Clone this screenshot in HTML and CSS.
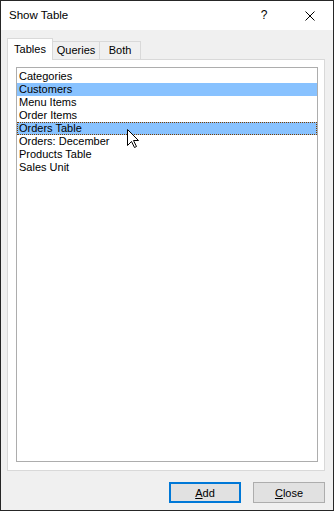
FILE: index.html
```html
<!DOCTYPE html>
<html lang="en">
<head>
    <meta charset="UTF-8">
    <title>Show Table</title>
    <link rel="stylesheet" href="styles.css">
</head>
<body>
    <div class="window">
        <div class="titlebar">
            <span class="title">Show Table</span>
            <span class="title-btn help">?</span>
            <span class="title-btn close-x">
                <svg width="10" height="10" viewBox="0 0 10 10">
                    <path d="M0.5 0.5 L9.5 9.5 M9.5 0.5 L0.5 9.5" stroke="#000" stroke-width="1" fill="none"/>
                </svg>
            </span>
        </div>

        <div class="dialog-body">
            <div class="tabs">
                <div class="tab tab-tables selected">Tables</div>
                <div class="tab tab-queries">Queries</div>
                <div class="tab tab-both">Both</div>
            </div>

            <div class="tab-panel">
                <ul class="listbox">
                    <li>Categories</li>
                    <li class="selected">Customers</li>
                    <li>Menu Items</li>
                    <li>Order Items</li>
                    <li class="selected focused">Orders Table</li>
                    <li>Orders: December</li>
                    <li>Products Table</li>
                    <li>Sales Unit</li>
                </ul>
            </div>

            <div class="buttons">
                <button class="btn default"><u>A</u>dd</button>
                <button class="btn"><u>C</u>lose</button>
            </div>
        </div>

        <!-- mouse pointer over the list -->
        <svg class="cursor" width="13" height="20" viewBox="0 0 13 20">
            <path d="M0.5 0.5 L0.5 16.5 L4.5 12.5 L7.5 18.5 L9.5 17.5 L6.5 11.5 L11.5 11.5 Z"
                  fill="#fff" stroke="#000" stroke-width="1" stroke-linejoin="miter"/>
        </svg>
    </div>
</body>
</html>
```

FILE: styles.css
```css
html, body {
    margin: 0;
    padding: 0;
}
body {
    font-family: "Liberation Sans", Arial, sans-serif;
    font-size: 11px;
    color: #000;
}
.window {
    position: relative;
    box-sizing: border-box;
    width: 334px;
    height: 511px;
    border: 1px solid #262626;
    background-color: #f0f0f0;
    display: flex;
    flex-direction: column;
}
.titlebar {
    height: 29px;
    background-color: #fff;
    display: flex;
    align-items: center;
}
.title {
    flex: 1;
    padding-left: 8px;
    font-size: 11.5px;
    padding-bottom: 1px;
}
.title-btn {
    width: 46px;
    height: 29px;
    display: flex;
    align-items: center;
    justify-content: center;
}
.help {
    font-size: 12px;
    padding-bottom: 1px;
}
.close-x svg {
    display: block;
}
.dialog-body {
    flex: 1;
    padding: 8px 8px 7px 6px;
    display: flex;
    flex-direction: column;
}
.tabs {
    display: flex;
    align-items: flex-end;
    height: 21px;
    position: relative;
    z-index: 1;
}
.tab {
    box-sizing: border-box;
    height: 18px;
    line-height: 17px;
    text-align: center;
    border: 1px solid #d9d9d9;
    border-bottom: none;
    background-color: #f0f0f0;
}
.tab + .tab {
    border-left: none;
}
.tab.selected {
    height: 22px;
    margin-bottom: -1px;
    line-height: 20px;
    background-color: #fff;
}
.tab-tables {
    width: 46px;
}
.tab-queries {
    width: 47px;
}
.tab-both {
    width: 41px;
}
.tab-panel {
    box-sizing: border-box;
    height: 412px;
    border: 1px solid #d9d9d9;
    background-color: #fff;
    padding: 7px 6px 8px 8px;
}
.listbox {
    box-sizing: border-box;
    height: 395px;
    margin: 0;
    padding: 2px 0 0 0;
    list-style: none;
    border: 1px solid #adadad;
    background-color: #fff;
}
.listbox li {
    height: 13px;
    line-height: 13px;
    padding-left: 2px;
    white-space: nowrap;
}
.listbox li.selected {
    background-color: #88c2ff;
}
.listbox li.focused {
    outline: 1px dotted #7a3e00;
    outline-offset: -1px;
}
.buttons {
    display: flex;
    justify-content: flex-end;
    gap: 12px;
    margin-top: 11px;
}
.btn {
    box-sizing: border-box;
    width: 72px;
    height: 21px;
    padding: 0;
    font-family: "Liberation Sans", Arial, sans-serif;
    font-size: 11px;
    color: #000;
    background-color: #e1e1e1;
    border: 1px solid #adadad;
}
.btn.default {
    border: 2px solid #0078d7;
}
.cursor {
    position: absolute;
    left: 126px;
    top: 128px;
}
```
